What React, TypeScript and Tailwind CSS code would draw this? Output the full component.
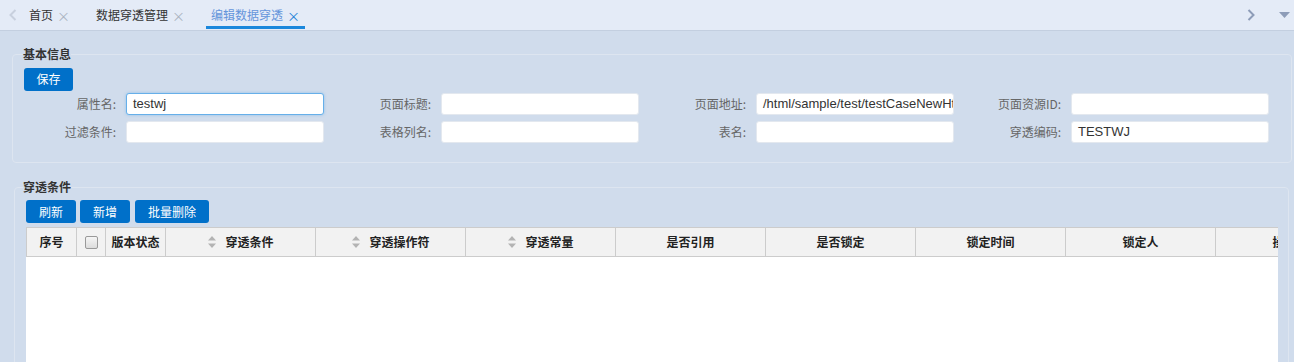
import React from "react";

const font = { fontFamily: '"Noto Sans CJK SC", "Liberation Sans", sans-serif' };

function Tab({ label, active }: { label: string; active?: boolean }) {
  return (
    <div className="relative flex h-full items-center">
      <span className={`text-[12px] ${active ? "text-[#6495db]" : "text-[#333]"}`}>{label}</span>
      <span className={`ml-[4px] text-[13px] leading-none ${active ? "text-[#1a7fd6]" : "text-[#aab2c0]"}`}>×</span>
      {active && <div className="absolute bottom-[1px] left-[-5px] right-[-5px] h-[3px] bg-[#1a87dc]" />}
    </div>
  );
}

function Field({ label, value, focus }: { label: string; value?: string; focus?: boolean }) {
  return (
    <div className="flex w-[315px] items-center">
      <label className="w-[104px] pr-[1px] text-right text-[12px] text-[#666]">{label}</label>
      <div
        className={`ml-[9px] flex h-[22px] w-[198px] items-center overflow-hidden whitespace-nowrap rounded-[3px] border bg-white px-[6px] text-[13px] text-[#333] ${
          focus ? "border-[#66afe9] shadow-[0_0_3px_rgba(102,175,233,0.6)]" : "border-[#e3e8ef]"
        }`}
        style={{ fontFamily: '"Liberation Sans", Arial, sans-serif' }}
      >
        {value}
      </div>
    </div>
  );
}

function Btn({ label, w }: { label: string; w: string }) {
  return (
    <button className={`h-[23px] ${w} rounded-[3px] bg-[#0070c9] text-[12px] text-white`}>{label}</button>
  );
}

function SortIcon() {
  return (
    <svg width="10" height="14" viewBox="0 0 10 14" className="mr-[8px]">
      <path d="M5 1 L9 5.5 H1 Z" fill="#b3b3b3" />
      <path d="M5 13 L9 8.5 H1 Z" fill="#b3b3b3" />
    </svg>
  );
}

const cols: { label: string; w: string; sort?: boolean; check?: boolean }[] = [
  { label: "序号", w: "w-[50px]" },
  { label: "", w: "w-[29px]", check: true },
  { label: "版本状态", w: "w-[60px]" },
  { label: "穿透条件", w: "w-[150px]", sort: true },
  { label: "穿透操作符", w: "w-[150px]", sort: true },
  { label: "穿透常量", w: "w-[150px]", sort: true },
  { label: "是否引用", w: "w-[150px]" },
  { label: "是否锁定", w: "w-[150px]" },
  { label: "锁定时间", w: "w-[150px]" },
  { label: "锁定人", w: "w-[150px]" },
  { label: "操作", w: "w-[138px]" },
];

export default function App() {
  return (
    <div className="h-[362px] w-[1294px] overflow-hidden bg-[#d0dcec]" style={font}>
      {/* tab bar */}
      <div className="flex h-[31px] items-center border-b border-[#c3cfe0] bg-[#e4ebf7]">
        <svg width="8" height="12" viewBox="0 0 8 12" className="ml-[9px]">
          <path d="M6.5 1 L1.5 6 L6.5 11" fill="none" stroke="#c8d0de" strokeWidth="2" />
        </svg>
        <div className="ml-[12px] flex h-full gap-[26px]">
          <Tab label="首页" />
          <Tab label="数据穿透管理" />
          <Tab label="编辑数据穿透" active />
        </div>
        <div className="ml-auto flex items-center">
          <svg width="8" height="12" viewBox="0 0 8 12">
            <path d="M1.5 1 L6.5 6 L1.5 11" fill="none" stroke="#8d9cb8" strokeWidth="2" />
          </svg>
          <svg width="11" height="7" viewBox="0 0 11 7" className="ml-[24px] mr-[4px]">
            <path d="M0 0 H11 L5.5 6 Z" fill="#8d9cb8" />
          </svg>
        </div>
      </div>

      {/* 基本信息 */}
      <fieldset className="ml-[12px] mr-[2px] mt-[14px] h-[118px] rounded-[4px] border border-[#dde5f0] px-[11px]">
        <legend className="ml-[-1px] px-0 text-[12px] font-bold text-[#333]">基本信息</legend>
        <div className="mt-[2px]">
          <Btn label="保存" w="w-[49px]" />
        </div>
        <div className="ml-[-11px] mt-[2px] flex flex-col gap-[6px]">
          <div className="flex">
            <Field label="属性名:" value="testwj" focus />
            <Field label="页面标题:" />
            <Field label="页面地址:" value="/html/sample/test/testCaseNewHtml" />
            <Field label="页面资源ID:" />
          </div>
          <div className="flex">
            <Field label="过滤条件:" />
            <Field label="表格列名:" />
            <Field label="表名:" />
            <Field label="穿透编码:" value="TESTWJ" />
          </div>
        </div>
      </fieldset>

      {/* 穿透条件 */}
      <fieldset className="ml-[14px] mr-[5px] mt-[15px] h-[200px] rounded-[4px] border border-[#dde5f0] pl-[11px]">
        <legend className="ml-[-3px] px-0 text-[12px] font-bold text-[#333]">穿透条件</legend>
        <div className="mt-[4px] flex gap-[4px]">
          <Btn label="刷新" w="w-[50px]" />
          <Btn label="新增" w="w-[50px]" />
          <Btn label="批量删除" w="ml-[1px] w-[74px]" />
        </div>
        <div className="mt-[4px] w-[1252px] overflow-hidden bg-white">
          <div className="flex h-[30px] w-max border-y border-[#cccccc] bg-[#f2f2f2]">
            {cols.map((c, i) => (
              <div
                key={i}
                className={`flex h-full shrink-0 items-center justify-center border-l border-[#cccccc] text-[12px] font-bold text-[#222] ${c.w}`}
              >
                {c.check && <div className="h-[13px] w-[13px] rounded-[2px] border border-[#999] bg-gradient-to-b from-[#f5f5f5] to-[#dcdcdc]" />}
                {c.sort && <SortIcon />}
                {c.label}
              </div>
            ))}
          </div>
          <div className="h-[120px]" />
        </div>
      </fieldset>
    </div>
  );
}
